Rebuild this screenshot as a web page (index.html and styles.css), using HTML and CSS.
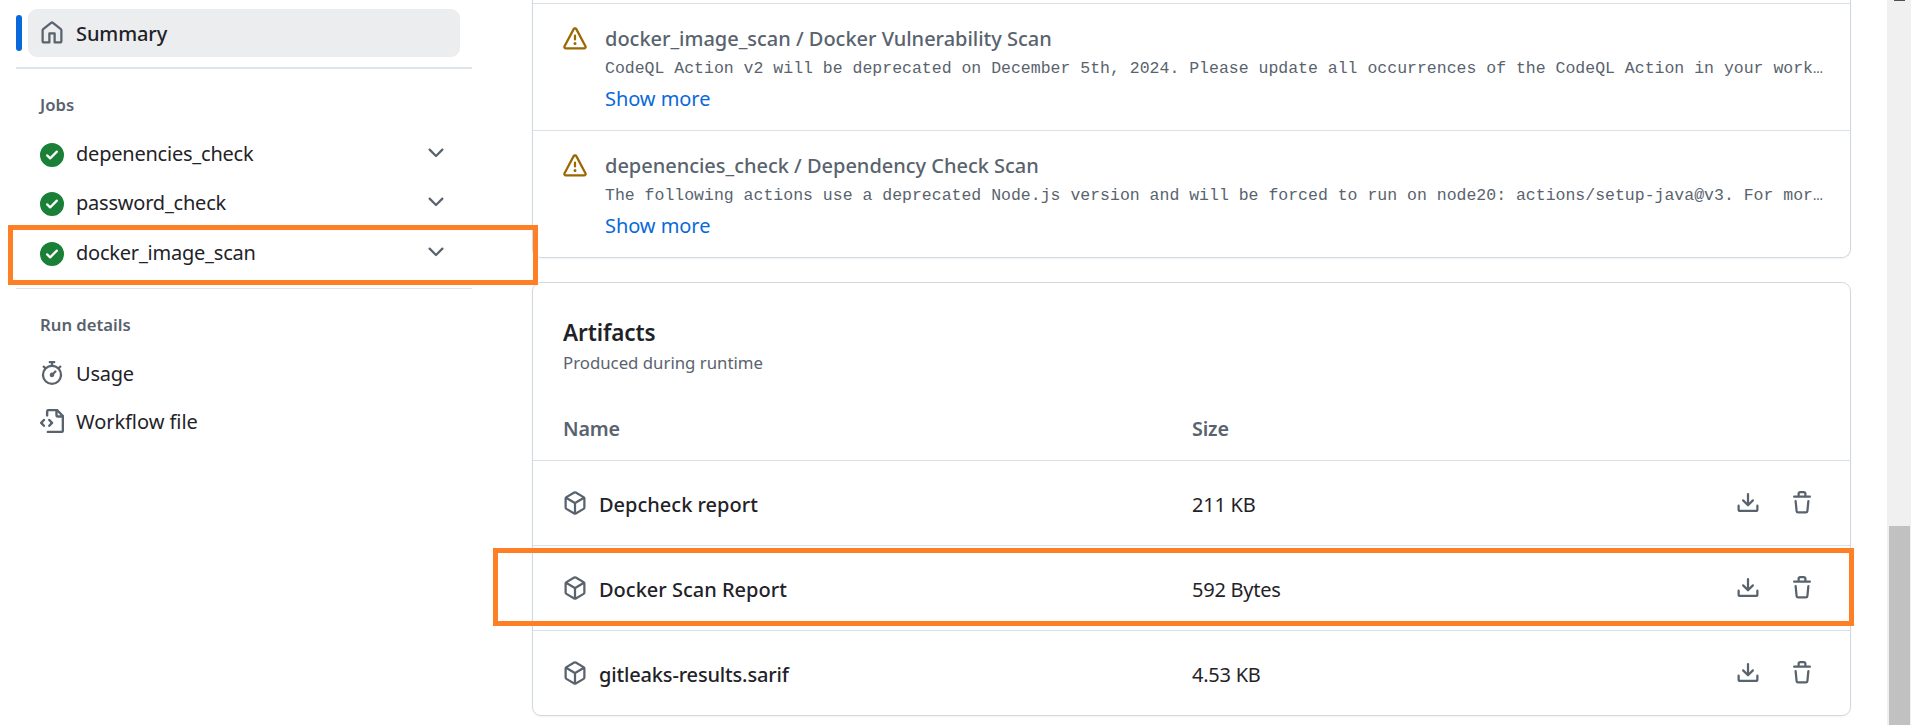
FILE: index.html
```html
<!DOCTYPE html>
<html lang="en">
<head>
<meta charset="utf-8">
<title>Workflow run</title>
<link rel="stylesheet" href="styles.css">
</head>
<body>
<svg class="defs" aria-hidden="true">
  <symbol id="home" viewBox="0 0 16 16"><path d="M6.906.664a1.749 1.749 0 0 1 2.187 0l5.25 4.2c.415.332.657.835.657 1.367v7.019A1.75 1.75 0 0 1 13.25 15h-3.5a.75.75 0 0 1-.75-.75V9H7v5.25a.75.75 0 0 1-.75.75h-3.5A1.75 1.75 0 0 1 1 13.25V6.23c0-.531.242-1.034.657-1.366l5.25-4.2Zm1.25 1.171a.25.25 0 0 0-.312 0l-5.25 4.2a.25.25 0 0 0-.094.196v7.019c0 .138.112.25.25.25H5.5V8.25a.75.75 0 0 1 .75-.75h3.5a.75.75 0 0 1 .75.75v5.25h2.75a.25.25 0 0 0 .25-.25V6.23a.25.25 0 0 0-.094-.195Z"/></symbol>
  <symbol id="check" viewBox="0 0 16 16"><path d="M8 16A8 8 0 1 1 8 0a8 8 0 0 1 0 16Zm3.78-9.72a.751.751 0 0 0-.018-1.042.751.751 0 0 0-1.042-.018L6.75 9.19 5.28 7.72a.751.751 0 0 0-1.042.018.751.751 0 0 0-.018 1.042l2 2a.75.75 0 0 0 1.06 0Z"/></symbol>
  <symbol id="chevron" viewBox="0 0 16 16"><path d="M12.78 5.22a.749.749 0 0 1 0 1.06l-4.25 4.25a.749.749 0 0 1-1.06 0L3.22 6.28a.749.749 0 1 1 1.06-1.06L8 8.939l3.72-3.719a.749.749 0 0 1 1.06 0Z"/></symbol>
  <symbol id="alert" viewBox="0 0 16 16"><path d="M6.457 1.047c.659-1.234 2.427-1.234 3.086 0l6.082 11.378A1.75 1.75 0 0 1 14.082 15H1.918a1.75 1.75 0 0 1-1.543-2.575Zm1.763.707a.25.25 0 0 0-.44 0L1.698 13.132a.25.25 0 0 0 .22.368h12.164a.25.25 0 0 0 .22-.368Zm.53 3.996v2.5a.75.75 0 0 1-1.5 0v-2.5a.75.75 0 0 1 1.5 0ZM9 11a1 1 0 1 1-2 0 1 1 0 0 1 2 0Z"/></symbol>
  <symbol id="stopwatch" viewBox="0 0 16 16"><path d="M5.75.75A.75.75 0 0 1 6.5 0h3a.75.75 0 0 1 0 1.5h-.75v1l-.001.041a6.724 6.724 0 0 1 3.464 1.435l.007-.006.75-.75a.749.749 0 0 1 1.275.326.749.749 0 0 1-.215.734l-.75.75-.006.007a6.75 6.75 0 1 1-10.548 0L2.72 5.03l-.75-.75a.751.751 0 0 1 .018-1.042.751.751 0 0 1 1.042-.018l.75.75.007.006A6.72 6.72 0 0 1 7.25 2.541V1.5H6.5a.75.75 0 0 1-.75-.75ZM8 14.5a5.25 5.25 0 1 0-.001-10.501A5.25 5.25 0 0 0 8 14.5Zm.389-6.7 1.33-1.33a.75.75 0 1 1 1.061 1.06L9.45 8.861A1.503 1.503 0 0 1 8 10.75a1.499 1.499 0 1 1 .389-2.95Z"/></symbol>
  <symbol id="workflow" viewBox="0 0 16 16"><g fill="none" stroke="currentColor" stroke-width="1.6" stroke-linecap="round" stroke-linejoin="round"><path d="M4.75 4.25v-2.5a1 1 0 0 1 1-1h5.6l3.9 3.9v9.6a1 1 0 0 1-1 1h-9"/><path d="M11 .9v3.1a1 1 0 0 0 1 1h3.1M2.6 7.3.8 9.25l1.8 1.95M6.2 7.3 8 9.25 6.2 11.2"/></g></symbol>
  <symbol id="package" viewBox="0 0 16 16"><path d="m8.878.392 5.25 3.045c.54.314.872.89.872 1.514v6.098a1.75 1.75 0 0 1-.872 1.514l-5.25 3.045a1.75 1.75 0 0 1-1.756 0l-5.25-3.045A1.75 1.75 0 0 1 1 11.049V4.951c0-.624.332-1.201.872-1.514L7.122.392a1.75 1.75 0 0 1 1.756 0ZM7.875 1.69l-4.63 2.685L8 7.133l4.755-2.758-4.63-2.685a.248.248 0 0 0-.25 0ZM2.5 5.677v5.372c0 .09.047.171.125.216l4.625 2.683V8.432Zm6.25 8.271 4.625-2.683a.25.25 0 0 0 .125-.216V5.677L8.75 8.432Z"/></symbol>
  <symbol id="download" viewBox="0 0 16 16"><path d="M2.75 14A1.75 1.75 0 0 1 1 12.25v-2.5a.75.75 0 0 1 1.5 0v2.5c0 .138.112.25.25.25h10.5a.25.25 0 0 0 .25-.25v-2.5a.75.75 0 0 1 1.5 0v2.5A1.75 1.75 0 0 1 13.25 14Z"/><path d="M7.25 7.689V2a.75.75 0 0 1 1.5 0v5.689l1.97-1.969a.749.749 0 1 1 1.06 1.06l-3.25 3.25a.749.749 0 0 1-1.06 0L4.22 6.78a.749.749 0 1 1 1.06-1.06l1.97 1.969Z"/></symbol>
  <symbol id="trash" viewBox="0 0 16 16"><path d="M11 1.75V3h2.25a.75.75 0 0 1 0 1.5H2.75a.75.75 0 0 1 0-1.5H5V1.75C5 .784 5.784 0 6.75 0h2.5C10.216 0 11 .784 11 1.75ZM4.496 6.675l.66 6.6a.25.25 0 0 0 .249.225h5.19a.25.25 0 0 0 .249-.225l.66-6.6a.75.75 0 0 1 1.492.149l-.66 6.6A1.748 1.748 0 0 1 10.595 15h-5.19a1.75 1.75 0 0 1-1.741-1.575l-.66-6.6a.75.75 0 1 1 1.492-.15ZM6.5 1.75V3h3V1.75a.25.25 0 0 0-.25-.25h-2.5a.25.25 0 0 0-.25.25Z"/></symbol>
</svg>
<div class="page">
  <nav class="sidebar">
    <div class="current">
      <span class="marker"></span>
      <a class="item item-active"><svg class="icon"><use href="#home"/></svg><span class="label semi">Summary</span></a>
    </div>
    <div class="rule rule-thick"></div>
    <h2 class="group">Jobs</h2>
    <a class="item job"><svg class="icon ok"><use href="#check"/></svg><span class="label">depenencies_check</span><svg class="icon chev"><use href="#chevron"/></svg></a>
    <a class="item job"><svg class="icon ok"><use href="#check"/></svg><span class="label">password_check</span><svg class="icon chev"><use href="#chevron"/></svg></a>
    <a class="item job"><svg class="icon ok"><use href="#check"/></svg><span class="label">docker_image_scan</span><svg class="icon chev"><use href="#chevron"/></svg></a>
    <div class="rule rule-thin"></div>
    <h2 class="group group-run">Run details</h2>
    <a class="item detail"><svg class="icon"><use href="#stopwatch"/></svg><span class="label">Usage</span></a>
    <a class="item detail"><svg class="icon"><use href="#workflow"/></svg><span class="label label-file">Workflow file</span></a>
  </nav>
  <main class="content">
    <section class="card annotations">
      <article class="note">
        <svg class="icon warn"><use href="#alert"/></svg>
        <div class="note-body">
          <h3 class="note-title">docker_image_scan / Docker Vulnerability Scan</h3>
          <p class="note-text">CodeQL Action v2 will be deprecated on December 5th, 2024. Please update all occurrences of the CodeQL Action in your work…</p>
          <a class="more">Show more</a>
        </div>
      </article>
      <article class="note">
        <svg class="icon warn"><use href="#alert"/></svg>
        <div class="note-body">
          <h3 class="note-title">depenencies_check / Dependency Check Scan</h3>
          <p class="note-text">The following actions use a deprecated Node.js version and will be forced to run on node20: actions/setup-java@v3. For mor…</p>
          <a class="more">Show more</a>
        </div>
      </article>
    </section>
    <section class="card artifacts">
      <header class="head">
        <h2 class="title">Artifacts</h2>
        <p class="sub">Produced during runtime</p>
      </header>
      <div class="row columns"><span>Name</span><span>Size</span></div>
      <div class="row"><span class="name"><svg class="icon"><use href="#package"/></svg><span>Depcheck report</span></span><span class="size">211 KB</span><span class="actions"><svg class="icon"><use href="#download"/></svg><svg class="icon"><use href="#trash"/></svg></span></div>
      <div class="row"><span class="name"><svg class="icon"><use href="#package"/></svg><span>Docker Scan Report</span></span><span class="size">592 Bytes</span><span class="actions"><svg class="icon"><use href="#download"/></svg><svg class="icon"><use href="#trash"/></svg></span></div>
      <div class="row"><span class="name name-file"><svg class="icon"><use href="#package"/></svg><span>gitleaks-results.sarif</span></span><span class="size">4.53 KB</span><span class="actions"><svg class="icon"><use href="#download"/></svg><svg class="icon"><use href="#trash"/></svg></span></div>
    </section>
  </main>
  <div class="scrollbar"><span class="arrow"></span><span class="thumb"></span></div>
  <div class="highlight highlight-job"></div>
  <div class="highlight highlight-artifact"></div>
</div>
</body>
</html>
```
FILE: styles.css
```css
* { box-sizing: border-box; }
body { margin: 0; background: #fff; overflow: hidden; font-family: "Noto Sans", "Open Sans", sans-serif; font-size: 20px; font-weight: 400; color: #1f2328; }
h2, h3, p { margin: 0; font-weight: 600; }
.defs { display: none; }
.page { position: relative; display: flex; width: 1911px; height: 725px; overflow: hidden; }
.icon { width: 24px; height: 24px; flex: none; display: block; fill: currentColor; color: #59636e; }

.sidebar { width: 472px; padding: 9px 0 0 16px; flex: none; }
.current { display: flex; align-items: center; gap: 6px; height: 48px; }
.marker { width: 6px; height: 36px; border-radius: 3px; background: #0969da; }
.item { display: flex; align-items: center; gap: 12px; padding-left: 24px; height: 48px; }
.item-active { width: 432px; padding-left: 12px; border-radius: 9px; background: #ecedef; }
.label { line-height: 30px; white-space: nowrap; letter-spacing: -0.22px; }
.job .label { padding-bottom: 2px; }
.detail .label { padding-top: 2px; }
.label-file { letter-spacing: -0.05px; }
.semi { font-weight: 500; padding-top: 1px; letter-spacing: -0.1px; }
.rule { background: #dfe4e9; }
.rule-thick { height: 2px; margin-top: 10px; }
.rule-thin { height: 1px; margin-top: 9px; }
.group { padding: 22px 0 0 24px; font-size: 16.7px; line-height: 27px; color: #59636e; }
.group + .job { margin-top: 12px; }
.job { height: 49.5px; padding-right: 24px; }
.job .chev { margin-left: auto; margin-bottom: 4px; }
.icon.ok { color: #1a7f37; }
.icon.warn { color: #9a6700; }
.group-run { padding-top: 22px; margin-bottom: 11px; }

.content { margin-left: 60px; width: 1319px; flex: none; }
.card { border: 1px solid #d1d9e0; border-radius: 9px; box-shadow: 0 1px 2px rgba(31,35,40,.06); }
.annotations { border-top: 0; border-top-left-radius: 0; border-top-right-radius: 0; height: 258px; padding-top: 3px; }
.note { display: flex; gap: 18px; height: 127px; border-top: 1px solid #d9e0e6; padding: 23px 24px 0 30px; }
.note-body { min-width: 0; flex: 1; }
.note-title { font-size: 20px; line-height: 30px; color: #59636e; font-weight: 500; margin-top: -3px; white-space: nowrap; letter-spacing: -0.02px; }
.note-text { font: 16.5px/27px "Liberation Mono", monospace; color: #59636e; white-space: nowrap; padding-top: 1px; }
.more { display: block; line-height: 30px; margin-top: 2px; color: #0969da; letter-spacing: -0.06px; }

.artifacts { margin-top: 24px; height: 434px; }
.head { padding: 32px 30px 0; height: 116px; }
.title { font-size: 22.5px; line-height: 36px; letter-spacing: -0.1px; }
.sub { font-size: 16.8px; line-height: 27px; font-weight: 400; color: #59636e; margin-top: -2px; }
.row { display: grid; grid-template-columns: 629px 1fr auto; align-items: center; height: 85px; padding: 0 36px 0 30px; border-top: 1px solid #d9e0e6; }
.columns { height: 61px; padding-bottom: 3px; border-top: 0; color: #59636e; font-size: 19.7px; font-weight: 600; letter-spacing: -0.15px; }
.name { display: flex; align-items: center; gap: 12px; font-weight: 500; }
.name span { padding-top: 3px; }
.name-file { letter-spacing: -0.16px; }
.size { padding-top: 3px; letter-spacing: -0.25px; }
.actions { display: flex; gap: 30px; }

.scrollbar { position: relative; margin-left: auto; width: 24px; background: #f0f0f0; }
.arrow { position: absolute; left: 7px; top: 0; width: 11px; height: 1px; background: #505050; }
.thumb { position: absolute; left: 2px; top: 526px; width: 21px; height: 199px; background: #c1c1c1; }
.highlight { position: absolute; border: 5px solid #ff7f27; }
.highlight-job { left: 8px; top: 225px; width: 530px; height: 60px; }
.highlight-artifact { left: 493px; top: 548px; width: 1361px; height: 78px; }
```
